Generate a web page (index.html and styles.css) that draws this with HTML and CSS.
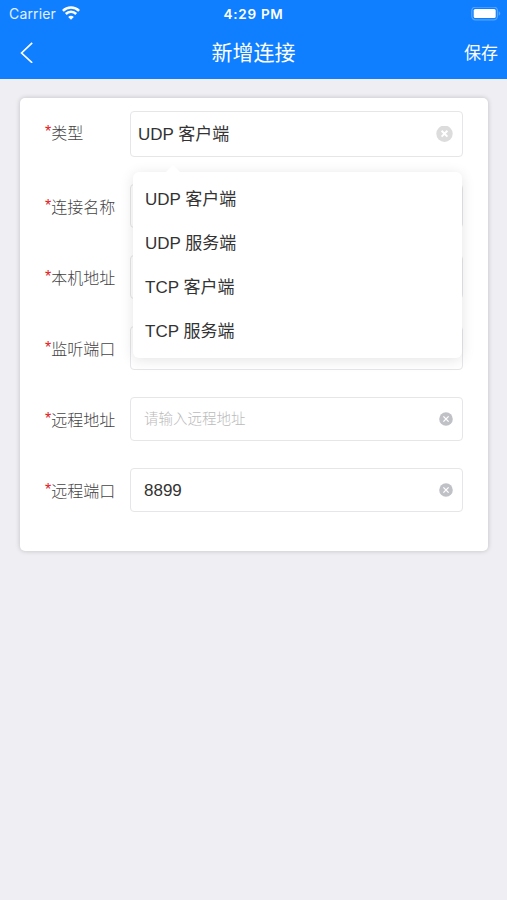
FILE: index.html
```html
<!DOCTYPE html>
<html lang="zh-CN">
<head>
    <meta charset="UTF-8">
    <meta name="viewport" content="width=device-width, initial-scale=1.0">
    <title>新增连接</title>
    <link rel="stylesheet" href="styles.css">
</head>
<body>
    <header class="header">
        <div class="status">
            <div class="carrier">
                <span>Carrier</span>
                <svg class="wifi" width="18" height="14" viewBox="0 0 18 14" fill="none" stroke="#fff" stroke-width="2.5">
                    <path d="M0.9 4.9C5.4 0.4 12.6 0.4 17.1 4.9"/>
                    <path d="M3.8 8C6.7 5.1 11.3 5.1 14.2 8"/>
                    <path d="M9 13.8L6.2 10.9C7.8 9.3 10.2 9.3 11.8 10.9Z" fill="#fff" stroke="none"/>
                </svg>
            </div>
            <div class="time">4:29 PM</div>
            <svg class="battery" width="30" height="14" viewBox="0 0 30 14">
                <rect x="0.8" y="0.2" width="25.6" height="12.6" rx="3.6" fill="none" stroke="#57a5ff" stroke-width="1.2"/>
                <rect x="2.7" y="2" width="22" height="9" rx="1.6" fill="#fff"/>
                <path d="M27.7 4.3C29.8 5.1 29.8 7.9 27.7 8.7Z" fill="#57a5ff"/>
            </svg>
        </div>
        <div class="nav">
            <svg class="back" width="14" height="22" viewBox="0 0 14 22" fill="none" stroke="#fff" stroke-width="1.7">
                <path d="M12.2 1.8L1.6 12L12.2 21.8"/>
            </svg>
            <h1 class="title">新增连接</h1>
            <span class="save">保存</span>
        </div>
    </header>

    <form class="card">
        <div class="row row_type">
            <label class="label"><i class="star">*</i>类型</label>
            <div class="box select">
                <span class="value">UDP 客户端</span>
                <svg class="clear_big" width="17" height="17" viewBox="0 0 17 17">
                    <circle cx="8.5" cy="7.7" r="8.2" fill="#dcdcdc"/>
                    <path d="M5.6 4.8L11.4 10.6M11.4 4.8L5.6 10.6" stroke="#fff" stroke-width="2"/>
                </svg>
                <ul class="menu">
                    <li>UDP 客户端</li>
                    <li>UDP 服务端</li>
                    <li>TCP 客户端</li>
                    <li>TCP 服务端</li>
                </ul>
            </div>
        </div>
        <div class="row">
            <label class="label"><i class="star">*</i>连接名称</label>
            <div class="box"></div>
        </div>
        <div class="row">
            <label class="label"><i class="star">*</i>本机地址</label>
            <div class="box"></div>
        </div>
        <div class="row">
            <label class="label"><i class="star">*</i>监听端口</label>
            <div class="box"></div>
        </div>
        <div class="row">
            <label class="label"><i class="star">*</i>远程地址</label>
            <div class="box">
                <span class="placeholder">请输入远程地址</span>
                <svg class="clear" width="14" height="14" viewBox="0 0 14 14">
                    <circle cx="7" cy="7" r="6.8" fill="#c0c1c6"/>
                    <path d="M4.4 4.4L9.6 9.6M9.6 4.4L4.4 9.6" stroke="#fff" stroke-width="1.3"/>
                </svg>
            </div>
        </div>
        <div class="row">
            <label class="label"><i class="star">*</i>远程端口</label>
            <div class="box">
                <span class="number">8899</span>
                <svg class="clear" width="14" height="14" viewBox="0 0 14 14">
                    <circle cx="7" cy="7" r="6.8" fill="#c0c1c6"/>
                    <path d="M4.4 4.4L9.6 9.6M9.6 4.4L4.4 9.6" stroke="#fff" stroke-width="1.3"/>
                </svg>
            </div>
        </div>
    </form>
</body>
</html>
```
FILE: styles.css
```css
*{
    box-sizing: border-box;
}
body{
    margin: 0;
    min-height: 900px;
    background-color: #eeeef3;
    font-family: "Liberation Sans", "Noto Sans CJK SC", sans-serif;
    font-size: 17px;
    color: #333;
}
/* 顶部 */
.header{
    height: 79px;
    background-color: #0f7fff;
    color: #fff;
}
.status{
    display: grid;
    grid-template-columns: 1fr auto 1fr;
    align-items: center;
    height: 27px;
    padding: 0 6px 0 9px;
    font-family: Inter, sans-serif;
    font-size: 14px;
}
.carrier{
    display: flex;
    align-items: center;
    gap: 6px;
    letter-spacing: 0.15px;
    color: #e3f0ff;
}
.wifi{
    margin-bottom: 1px;
}
.time{
    margin-left: -3px;
    font-size: 13.5px;
    font-weight: 600;
    letter-spacing: 0.75px;
}
.battery{
    justify-self: end;
}
.nav{
    display: grid;
    grid-template-columns: 1fr auto 1fr;
    align-items: center;
    height: 52px;
    padding: 0 8px 2px 20px;
}
.title{
    margin: 0 0 2px -12px;
    font-size: 21px;
    font-weight: 400;
}
.save{
    justify-self: end;
    margin: 0 1px 2px 0;
    font-size: 17px;
}
/* 表单 */
.card{
    height: 453px;
    margin: 19px 19px 0 20px;
    padding: 13px 25px 0;
    border-radius: 5px;
    background-color: #fff;
    box-shadow: 0 0 5px rgba(0, 0, 0, 0.2);
}
.row{
    display: flex;
    align-items: center;
    height: 44px;
    margin-bottom: 27px;
}
.row_type{
    height: 46px;
}
.label{
    width: 85px;
    padding-bottom: 1px;
    font-size: 16px;
    font-weight: 300;
    color: #444;
    white-space: nowrap;
}
.row_type .label{
    padding-bottom: 4px;
}
.star{
    font-style: normal;
    font-weight: 400;
    vertical-align: 2px;
    line-height: 1;
    color: #e02020;
}
.box{
    position: relative;
    flex: 1;
    display: flex;
    align-items: center;
    justify-content: space-between;
    height: 100%;
    padding: 0 9px 0 13px;
    border: 1.5px solid #e6e6e8;
    border-radius: 4px;
}
.select{
    padding: 0 9px 0 7px;
}
.value{
    padding-bottom: 3px;
}
.number{
    padding-top: 2px;
}
.placeholder{
    padding-bottom: 4px;
    font-size: 14.5px;
    font-weight: 300;
    color: #bbb;
}
/* 下拉菜单 */
.menu{
    position: absolute;
    z-index: 1;
    top: 60px;
    left: 2px;
    width: 329px;
    height: 186px;
    margin: 0;
    padding: 6px 12px 4px;
    list-style: none;
    border-radius: 6px;
    background-color: #fff;
    box-shadow: 0 2px 14px rgba(0, 0, 0, 0.11);
}
.menu::before{
    content: "";
    position: absolute;
    top: -7px;
    left: 33px;
    border: 7px solid transparent;
    border-top: 0;
    border-bottom-color: #fff;
}
.menu li{
    height: 44px;
    line-height: 44px;
}
```
